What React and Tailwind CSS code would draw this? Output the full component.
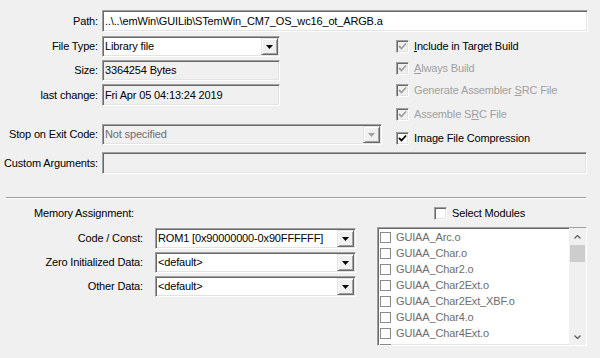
import React from 'react';

const sunken =
  'border border-t-[#a0a0a0] border-l-[#a0a0a0] border-b-white border-r-white shadow-[inset_1px_1px_0_#696969,inset_-1px_-1px_0_#e3e3e3]';
const raised =
  'border border-t-[#e3e3e3] border-l-[#e3e3e3] border-b-[#696969] border-r-[#696969] shadow-[inset_1px_1px_0_#fff,inset_-1px_-1px_0_#a0a0a0]';

function Arrow({ disabled }) {
  return (
    <svg width="7" height="4" viewBox="0 0 7 4">
      <polygon points="0,0 7,0 3.5,4" fill={disabled ? '#a0a0a0' : '#000'} />
    </svg>
  );
}

function Field({ className = '', children, muted, bg = 'bg-[#f0f0f0]' }) {
  return (
    <div className={`${sunken} ${bg} h-[21px] flex items-center pl-[2px] overflow-hidden whitespace-nowrap ${muted ? 'text-[#6d6d6d]' : 'text-black'} ${className}`}>
      {children}
    </div>
  );
}

function Select({ className = '', children, disabled }) {
  return (
    <div className={`${sunken} ${disabled ? 'bg-[#f0f0f0] text-[#6d6d6d]' : 'bg-white text-black'} h-[21px] flex items-center pl-[2px] pr-[1px] ${className}`}>
      <span className="flex-1 whitespace-nowrap overflow-hidden">{children}</span>
      <div className={`${raised} bg-[#f0f0f0] w-[17px] h-[17px] flex items-center justify-center`}>
        <Arrow disabled={disabled} />
      </div>
    </div>
  );
}

function Check({ checked, disabled, children }) {
  return (
    <div className="flex items-center h-[13px]">
      <div className={`${sunken} w-[13px] h-[13px] flex items-center justify-center ${disabled ? 'bg-[#f0f0f0]' : 'bg-white'}`}>
        {checked && (
          <svg width="9" height="9" viewBox="0 0 9 9">
            <polyline points="1,4 3.5,6.5 8,1.5" fill="none" stroke={disabled ? '#a0a0a0' : '#000'} strokeWidth="1.8" />
          </svg>
        )}
      </div>
      <span className={`ml-[5px] whitespace-nowrap ${disabled ? 'text-[#a0a0a0]' : 'text-black'}`}>{children}</span>
    </div>
  );
}

const modules = [
  'GUIAA_Arc.o',
  'GUIAA_Char.o',
  'GUIAA_Char2.o',
  'GUIAA_Char2Ext.o',
  'GUIAA_Char2Ext_XBF.o',
  'GUIAA_Char4.o',
  'GUIAA_Char4Ext.o',
  'GUIAA_Char4Ext_XBF.o',
];

export default function App() {
  return (
    <div
      className="w-[600px] h-[358px] bg-[#f0f0f0] text-[11px] leading-[13px] tracking-[-0.15px] text-black overflow-hidden"
      style={{ fontFamily: '"Liberation Sans", Arial, sans-serif' }}
    >
      {/* Path */}
      <div className="flex items-center mt-[10px]">
        <div className="w-[98px] text-right">Path:</div>
        <Field className="ml-[4px] w-[486px] h-[22px]" bg="bg-white">..\..\emWin\GUILib\STemWin_CM7_OS_wc16_ot_ARGB.a</Field>
      </div>

      <div className="flex mt-[4px]">
        {/* left column */}
        <div className="flex flex-col w-[382px]">
          <div className="flex flex-col gap-[3px]">
            <div className="flex items-center">
              <div className="w-[98px] text-right">File Type:</div>
              <Select className="ml-[4px] w-[178px]">Library file</Select>
            </div>
            <div className="flex items-center">
              <div className="w-[98px] text-right">Size:</div>
              <Field className="ml-[4px] w-[178px]">3364254 Bytes</Field>
            </div>
            <div className="flex items-center">
              <div className="w-[98px] text-right">last change:</div>
              <Field className="ml-[4px] w-[178px] h-[22px]">Fri Apr 05 04:13:24 2019</Field>
            </div>
          </div>
          <div className="flex items-center mt-[18px]">
            <div className="w-[98px] text-right">Stop on Exit Code:</div>
            <Select className="ml-[4px] w-[280px]" disabled>Not specified</Select>
          </div>
        </div>

        {/* right column */}
        <div className="flex flex-col ml-[14px] mt-[4px]">
          <Check checked disabled>
            <span className="text-black"><u className="underline-offset-1">I</u>nclude in Target Build</span>
          </Check>
          <div className="mt-[9px]">
            <Check checked disabled>
              <u className="underline-offset-1">A</u>lways Build
            </Check>
          </div>
          <div className="mt-[9px]">
            <Check checked disabled>
              Generate Assembler <u className="underline-offset-1">S</u>RC File
            </Check>
          </div>
          <div className="mt-[11px]">
            <Check checked disabled>
              Assemble S<u className="underline-offset-1">R</u>C File
            </Check>
          </div>
          <div className="mt-[11px]">
            <Check checked>Image File Compression</Check>
          </div>
        </div>
      </div>

      {/* Custom Arguments */}
      <div className="flex items-center mt-[7px]">
        <div className="w-[98px] text-right whitespace-nowrap">
          Custom Ar<u className="underline-offset-1">g</u>uments:
        </div>
        <Field className="ml-[4px] w-[485px] h-[22px]" />
      </div>

      {/* separator */}
      <div className="mx-[6px] w-[580px] mt-[23px] border-t border-t-[#a0a0a0] border-b border-b-white" />

      <div className="flex">
        <div className="flex flex-col w-[356px]">
          <div className="pl-[34px] mt-[8px]">Memory Assignment:</div>
          <div className="flex flex-col gap-[3px] mt-[8px]">
            <div className="flex items-center">
              <div className="w-[143px] text-right">Code / Const:</div>
              <Select className="ml-[12px] w-[201px]">ROM1 [0x90000000-0x90FFFFFF]</Select>
            </div>
            <div className="flex items-center">
              <div className="w-[143px] text-right">Zero Initialized Data:</div>
              <Select className="ml-[12px] w-[201px]">&lt;default&gt;</Select>
            </div>
            <div className="flex items-center">
              <div className="w-[143px] text-right">Other Data:</div>
              <Select className="ml-[12px] w-[201px]">&lt;default&gt;</Select>
            </div>
          </div>
        </div>

        <div className="flex flex-col ml-[21px]">
          <div className="pl-[57px] mt-[8px]">
            <Check>Select Modules</Check>
          </div>
          <div className={`${sunken} bg-white w-[210px] h-[119px] mt-[7px] flex overflow-hidden`}>
            <div className="flex-1 flex flex-col pl-[2px] pt-[1px] overflow-hidden">
              {modules.map((m) => (
                <div key={m} className="flex items-center h-[16px] shrink-0">
                  <div className="w-[11px] h-[11px] border border-[#8a8a8a] bg-white" />
                  <span className="ml-[5px] text-[#6d6d6d] whitespace-nowrap">{m}</span>
                </div>
              ))}
            </div>
            <div className="w-[17px] bg-[#f0f0f0] flex flex-col items-center">
              <div className="h-[17px] flex items-center justify-center">
                <svg width="7" height="4" viewBox="0 0 7 4">
                  <polyline points="0.5,3.5 3.5,0.5 6.5,3.5" fill="none" stroke="#606060" strokeWidth="1.3" />
                </svg>
              </div>
              <div className="w-[15px] h-[17px] bg-[#cdcdcd]" />
              <div className="flex-1" />
              <div className="h-[17px] flex items-center justify-center">
                <svg width="7" height="4" viewBox="0 0 7 4">
                  <polyline points="0.5,0.5 3.5,3.5 6.5,0.5" fill="none" stroke="#606060" strokeWidth="1.3" />
                </svg>
              </div>
            </div>
          </div>
        </div>
      </div>
    </div>
  );
}
